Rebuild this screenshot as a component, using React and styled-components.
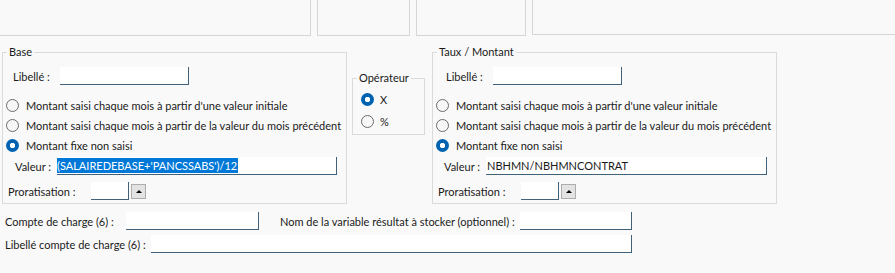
import React from 'react'
import styled, { createGlobalStyle, css } from 'styled-components'

const GlobalStyle = createGlobalStyle`
  body {
    margin: 0;
    background: #f9f9f9;
    font-family: Lato, "Liberation Sans", Arial, sans-serif;
    font-size: 11px;
    color: #1a1a1a;
  }
`

const Page = styled.div`
  width: 895px;
  height: 273px;
  overflow: hidden;
  background: #f9f9f9;
`

const TopBar = styled.div`
  display: flex;
  gap: 6px;
  margin-left: -1px;
`

const TopCell = styled.div`
  box-sizing: border-box;
  height: ${p => p.$h || 36}px;
  width: ${p => (p.$w ? `${p.$w}px` : 'auto')};
  flex: ${p => (p.$w ? 'none' : '1')};
  border: 1px solid #d6d6d6;
  border-top: none;
  margin-right: ${p => (p.$last ? '-1px' : '0')};
`

const Main = styled.div`
  display: flex;
  align-items: flex-start;
  padding-left: 2px;
  margin-top: 8px;
`

const Group = styled.fieldset`
  box-sizing: border-box;
  margin: ${p => p.$mt || 0}px 0 0 ${p => p.$ml || 0}px;
  padding: 0;
  width: ${p => p.$w}px;
  height: ${p => p.$h}px;
  border: 1px solid #dadada;
  min-width: 0;
`

const Legend = styled.legend`
  margin-left: 4px;
  padding: 0 2px;
  line-height: 16px;
`

const Row = styled.div`
  display: flex;
  align-items: center;
  height: ${p => p.$h || 18}px;
  margin-top: ${p => p.$mt || 0}px;
  padding-left: ${p => p.$pl || 0}px;
`

const Label = styled.span`
  flex: none;
  width: ${p => (p.$w ? `${p.$w}px` : 'auto')};
  margin-left: ${p => p.$ml || 0}px;
  white-space: nowrap;
`

const Field = styled.div`
  box-sizing: border-box;
  flex: none;
  width: ${p => p.$w}px;
  height: 18px;
  background: #fff;
  border-right: 1px solid #3f6179;
  border-bottom: 1px solid #3f6179;
  display: flex;
  align-items: center;
  white-space: nowrap;
  overflow: hidden;
`

const Selected = styled.span`
  background: #0078d7;
  color: #fff;
  line-height: 15px;
  padding-right: 1px;
`

const FieldText = styled.span`
  padding-left: 1px;
`

const Spin = styled.div`
  box-sizing: border-box;
  flex: none;
  width: 15px;
  height: 15px;
  margin-left: 2px;
  background: #e3e3e3;
  border: 1px solid #adadad;
  display: flex;
  align-items: center;
  justify-content: center;
  &::after {
    content: '';
    border-left: 3px solid transparent;
    border-right: 3px solid transparent;
    border-bottom: 3px solid #000;
  }
`

const RadioRow = styled.div`
  display: flex;
  align-items: center;
  gap: ${p => p.$gap || 7}px;
  height: 20px;
  padding-left: ${p => p.$pl || 3}px;
  margin-top: ${p => p.$mt || 0}px;
  white-space: nowrap;
`

const Dot = styled.span`
  box-sizing: border-box;
  flex: none;
  width: 13px;
  height: 13px;
  border-radius: 50%;
  ${p =>
    p.$on
      ? css`
          background: radial-gradient(circle, #fff 0 2.4px, #0063b1 3px);
        `
      : css`
          background: #f7f7f7;
          border: 1px solid #6b6b6b;
        `}
`

const Bottom = styled.div`
  display: flex;
  flex-direction: column;
  gap: 5px;
  margin-top: 8px;
  padding-left: 5px;
`

function Radio({ on, children, ...rest }) {
  return (
    <RadioRow {...rest}>
      <Dot $on={on} />
      <span>{children}</span>
    </RadioRow>
  )
}

function Block({ title, libPl, valPl, valW, children, ml }) {
  return (
    <Group $w={345} $h={160} $ml={ml}>
      <Legend>{title}</Legend>
      <Row $mt={7} $pl={libPl}>
        <Label $w={47}>Libellé :</Label>
        <Field $w={129} />
      </Row>
      <Radio $mt={10}>Montant saisi chaque mois à partir d'une valeur initiale</Radio>
      <Radio>Montant saisi chaque mois à partir de la valeur du mois précédent</Radio>
      <Radio on>Montant fixe non saisi</Radio>
      <Row $mt={2} $pl={valPl}>
        <Label $w={42}>Valeur :</Label>
        <Field $w={valW}>{children}</Field>
      </Row>
      <Row $mt={7} $pl={5}>
        <Label $w={83}>Proratisation :</Label>
        <Field $w={38} />
        <Spin />
      </Row>
    </Group>
  )
}

export default function App() {
  return (
    <Page>
      <GlobalStyle />
      <TopBar>
        <TopCell $w={312} />
        <TopCell $w={93} />
        <TopCell $w={110} />
        <TopCell $h={35} $last />
      </TopBar>
      <Main>
        <Block title="Base" libPl={10} valPl={12} valW={280}>
          <Selected>(SALAIREDEBASE+'PANCSSABS')/12</Selected>
        </Block>
        <Group $w={73} $h={65} $ml={5} $mt={26}>
          <Legend>Opérateur</Legend>
          <Radio on $pl={8} $gap={6} $mt={3}>X</Radio>
          <Radio $pl={8} $gap={6} $mt={2}>%</Radio>
        </Group>
        <Block title="Taux / Montant" libPl={13} valPl={11} valW={281} ml={7}>
          <FieldText>NBHMN/NBHMNCONTRAT</FieldText>
        </Block>
      </Main>
      <Bottom>
        <Row>
          <Label $w={121}>Compte de charge (6) :</Label>
          <Field $w={133} />
          <Label $w={240} $ml={21}>Nom de la variable résultat à stocker (optionnel) :</Label>
          <Field $w={112} />
        </Row>
        <Row>
          <Label $w={146}>Libellé compte de charge (6) :</Label>
          <Field $w={481} />
        </Row>
      </Bottom>
    </Page>
  )
}
